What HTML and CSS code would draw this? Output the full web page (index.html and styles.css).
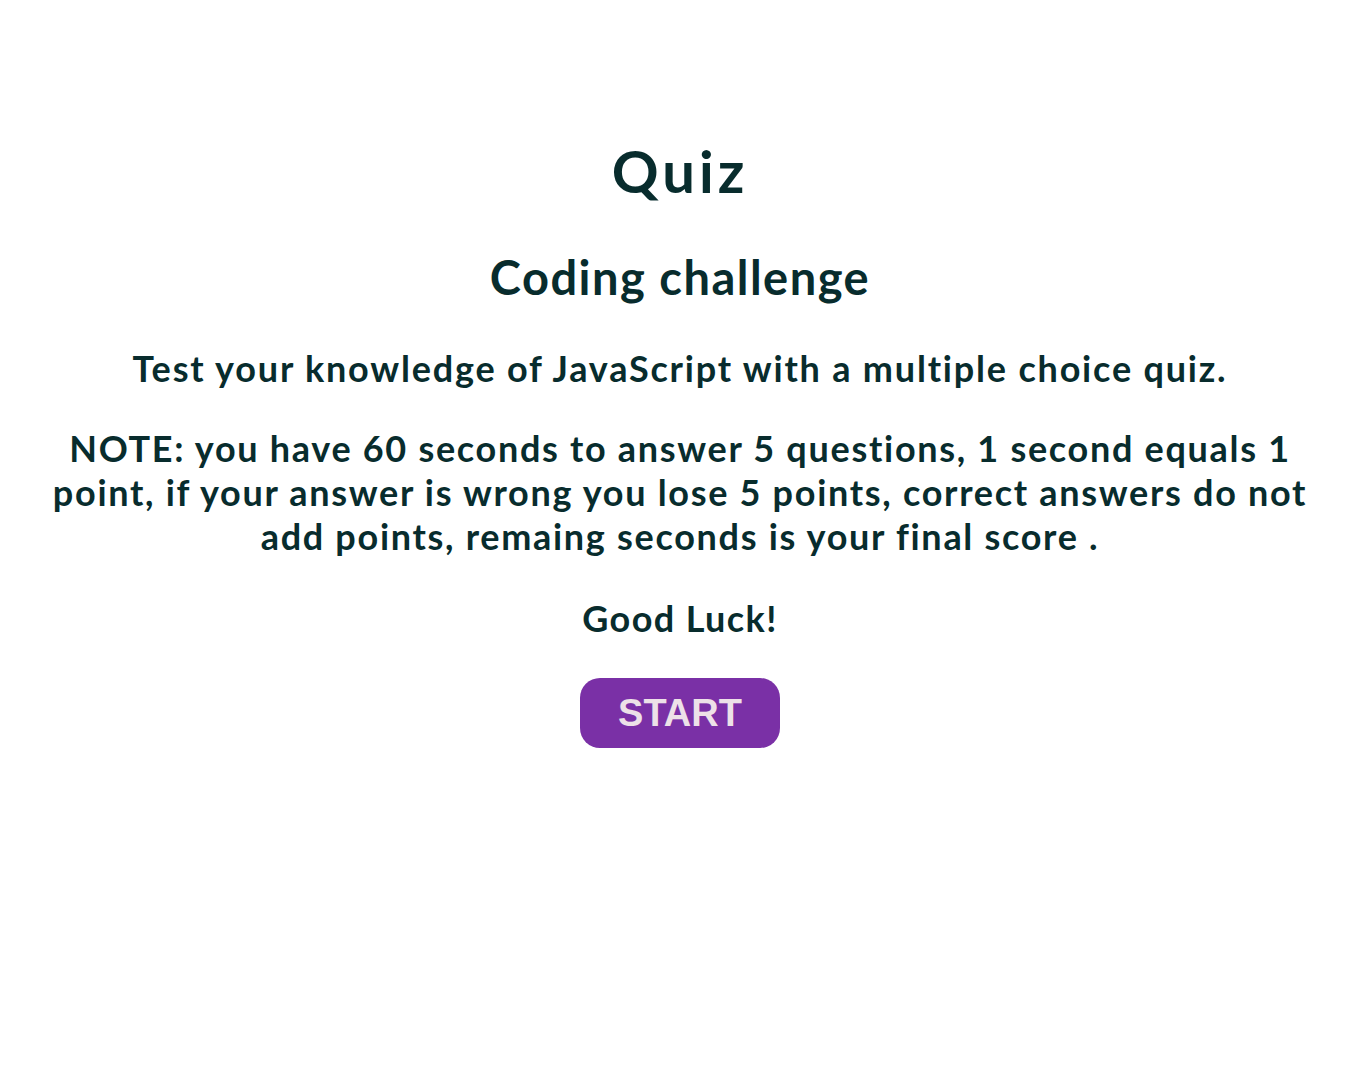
FILE: index.html
```html
<!DOCTYPE html>
<html lang="en">
<head>
<meta charset="utf-8">
<title>Quiz</title>
<link rel="stylesheet" href="styles.css">
</head>
<body>
<main class="intro">
  <h1 class="title">Quiz</h1>
  <h2 class="subtitle">Coding challenge</h2>
  <p class="lead">Test your knowledge of JavaScript with a multiple choice quiz.</p>
  <p class="note">NOTE: you have 60 seconds to answer 5 questions, 1 second equals 1 point, if your answer is wrong you lose 5 points, correct answers do not add points, remaing seconds is your final score .</p>
  <p class="luck">Good Luck!</p>
  <button class="start" type="button">START</button>
</main>
</body>
</html>
```

FILE: styles.css
```css
html, body {
  margin: 0;
  padding: 0;
  background: #ffffff;
}

body {
  font-family: "Lato", "Open Sans", sans-serif;
  font-weight: 700;
  color: #082c2d;
  font-variant-ligatures: none;
}

.intro {
  display: flex;
  flex-direction: column;
  align-items: center;
  text-align: center;
  padding: 142px 40px 0;
}

.title {
  margin: 0;
  font-size: 58px;
  line-height: 57px;
  font-weight: 700;
  letter-spacing: 4px;
}

.subtitle {
  margin: 55px 0 0;
  font-size: 47px;
  line-height: 47px;
  font-weight: 700;
  letter-spacing: 1.5px;
}

.lead,
.note,
.luck {
  font-size: 36px;
  line-height: 44px;
  font-weight: 700;
  letter-spacing: 1.8px;
}

.lead {
  margin: 45px 0 0;
}

.note {
  margin: 36px 0 0;
  letter-spacing: 1.7px;
}

.luck {
  margin: 38px 0 0;
  letter-spacing: 1.4px;
}

.start {
  margin-top: 38px;
  width: 200px;
  height: 70px;
  border: none;
  border-radius: 20px;
  background: #7a30a6;
  color: #ede1e8;
  font-family: "Liberation Sans", Arial, sans-serif;
  font-weight: 700;
  font-size: 38px;
  padding: 0;
  cursor: pointer;
}
```
